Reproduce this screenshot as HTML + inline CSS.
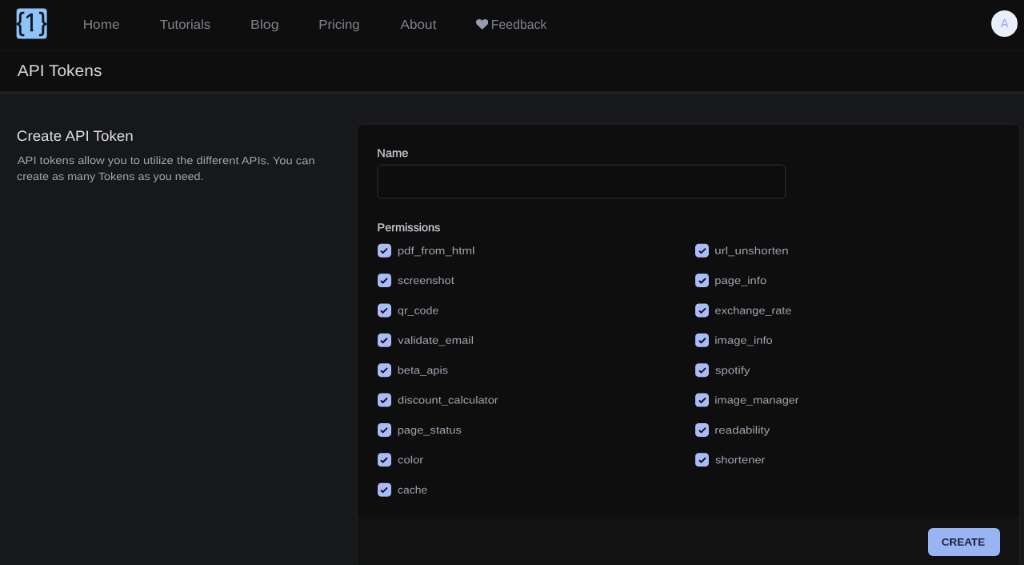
<!DOCTYPE html>
<html lang="en">
<head>
<meta charset="utf-8">
<title>API Tokens</title>
<style>
*{box-sizing:border-box;margin:0;padding:0}
html,body{width:1024px;height:565px;overflow:hidden;background:#17181a}
body{font-family:"Liberation Sans",sans-serif;position:relative;color:#a1a1aa;-webkit-font-smoothing:antialiased}
#root{position:absolute;left:0;top:0;width:1024px;height:565px;overflow:hidden;will-change:transform;zoom:1.25;transform:scale(0.8);transform-origin:0 0}
nav{position:absolute;left:0;top:0;width:1024px;height:51px;background:#0e0e0e;border-bottom:1px solid #1a1a1b}
.logo{position:absolute;left:0;top:0;transform:translate(16.5px,8.3px);width:30.7px;height:30.7px;border-radius:3.2px;background:#90c3f7;color:#0d1520}
.logo span{-webkit-text-stroke:0.25px #0d1520;position:absolute;font-size:24px;line-height:30px;top:0}
.logo .br{font-size:25px;top:-0.8px}
.logo .one{font-size:25px;top:-0.1px;clip-path:polygon(0 0,100% 0,100% 63%,64% 63%,64% 100%,44% 100%,44% 63%,0 63%)}
.nl{position:absolute;top:16.1px;height:16px;line-height:16px;font-size:12.9px;color:#80828c;white-space:nowrap}
.avatar{position:absolute;left:991.2px;top:10.3px;width:26.6px;height:26.8px;border-radius:50%;background:#e9eefb;color:#95a5f1;font-size:11.5px;line-height:26.6px;text-align:center}
header{position:absolute;left:0;top:51px;width:1024px;height:40px;background:#0e0e0e}
.hline{position:absolute;left:0;top:91px;width:1024px;height:3px;background:linear-gradient(#1c1d1f,#222326 50%,#17181a)}
h1{position:absolute;left:17px;top:50px;height:40px;line-height:40px;font-size:16.1px;font-weight:400;color:#d6d6dc;white-space:nowrap}
h2{position:absolute;left:17px;top:126px;line-height:20px;font-size:14.5px;font-weight:400;color:#dcdce2;white-space:nowrap}
.desc span{position:absolute;left:0;white-space:nowrap}
#d1{top:0.6px}#d2{top:16.6px}
.btn span{display:inline-block}
.desc{position:absolute;left:17px;top:152px;width:320px;height:34px;font-size:10.7px;line-height:16px;color:#9ea2ad}
.card{position:absolute;left:357.6px;top:124.8px;width:661.2px;height:440.4px;background:#0e0e0e;border-radius:5px;box-shadow:0 0 0 1.8px #1c1c1e}
.cin{position:absolute;left:0;top:.4px;width:661.2px;height:440px;border-radius:5px;overflow:hidden}
.foot{position:absolute;left:0;top:391.9px;width:662px;height:60px;background:#121212}
.lab{-webkit-text-stroke:0.2px #cdd0d8;position:absolute;font-size:11.2px;line-height:16px;color:#cdd0d8;white-space:nowrap}
.input{position:absolute;left:0;top:0;transform:translate(19.5px,38.9px);width:409px;height:34.8px;border:1px solid #333337;border-radius:5px;background:#0d0d0d}
.cb{position:absolute;height:16px;line-height:16px;font-size:10.4px;color:#9ea2ad;white-space:nowrap}
.cb i{position:absolute;left:-0.4px;top:1.2px;width:13.6px;height:13.6px;border-radius:3.5px;background:#a9bcf6}
.cb i svg{position:absolute;left:0.4px;top:0.4px;width:12.8px;height:12.8px}
.cb b{position:absolute;left:19.3px;top:0.5px;font-weight:400}
.btn{position:absolute;left:570.4px;top:402.7px;width:71.8px;height:27.7px;border-radius:5px;background:#99b4f2;color:#1b2038;font-size:10px;font-weight:700;text-align:center;line-height:29.2px}
/*TUNE*/
.nl:nth-of-type(1){transform-origin:0 50%;transform:translateX(-0.25px) scaleX(1.0672) rotate(0.03deg)}
.nl:nth-of-type(2){transform-origin:0 50%;transform:translateX(-0.20px) scaleX(1.0363) rotate(0.03deg)}
.nl:nth-of-type(3){transform-origin:0 50%;transform:translateX(0.00px) scaleX(1.1063) rotate(0.03deg)}
.nl:nth-of-type(4){transform-origin:0 50%;transform:translateX(0.15px) scaleX(1.0457) rotate(0.03deg)}
.nl:nth-of-type(5){transform-origin:0 50%;transform:translateX(0.45px) scaleX(1.0657) rotate(0.03deg)}
.nl:nth-of-type(6) span{transform-origin:0 50%;transform:translateX(-0.10px) scaleX(0.9837) rotate(0.03deg)}
h1{transform-origin:0 50%;transform:translateX(0.60px) scaleX(1.0422) rotate(0.03deg)}
h2{transform-origin:0 50%;transform:translateX(-0.15px) scaleX(1.0378) rotate(0.03deg)}
#d1{transform-origin:0 50%;transform:translateX(0.60px) scaleX(1.1037) rotate(0.03deg)}
#d2{transform-origin:0 50%;transform:translateX(0.10px) scaleX(1.0741) rotate(0.03deg)}
#lname{transform-origin:0 50%;transform:translateX(-0.55px) scaleX(1.0470) rotate(0.03deg)}
#lperm{transform-origin:0 50%;transform:translateX(-0.35px) scaleX(1.0327) rotate(0.03deg)}
#L0 b{transform-origin:0 50%;transform:translateX(0.55px) scaleX(1.1641) rotate(0.03deg)}
#L1 b{transform-origin:0 50%;transform:translateX(0.80px) scaleX(1.1109) rotate(0.03deg)}
#L2 b{transform-origin:0 50%;transform:translateX(0.80px) scaleX(1.0918) rotate(0.03deg)}
#L3 b{transform-origin:0 50%;transform:translateX(1.05px) scaleX(1.1384) rotate(0.03deg)}
#L4 b{transform-origin:0 50%;transform:translateX(0.55px) scaleX(1.1227) rotate(0.03deg)}
#L5 b{transform-origin:0 50%;transform:translateX(0.80px) scaleX(1.1299) rotate(0.03deg)}
#L6 b{transform-origin:0 50%;transform:translateX(0.55px) scaleX(1.1301) rotate(0.03deg)}
#L7 b{transform-origin:0 50%;transform:translateX(0.80px) scaleX(1.1455) rotate(0.03deg)}
#L8 b{transform-origin:0 50%;transform:translateX(0.80px) scaleX(1.0704) rotate(0.03deg)}
#R0 b{transform-origin:0 50%;transform:translateX(-0.55px) scaleX(1.1615) rotate(0.03deg)}
#R1 b{transform-origin:0 50%;transform:translateX(-0.55px) scaleX(1.1349) rotate(0.03deg)}
#R2 b{transform-origin:0 50%;transform:translateX(-0.30px) scaleX(1.1140) rotate(0.03deg)}
#R3 b{transform-origin:0 50%;transform:translateX(-0.55px) scaleX(1.1405) rotate(0.03deg)}
#R4 b{transform-origin:0 50%;transform:translateX(-0.05px) scaleX(1.1597) rotate(0.03deg)}
#R5 b{transform-origin:0 50%;transform:translateX(-0.55px) scaleX(1.1219) rotate(0.03deg)}
#R6 b{transform-origin:0 50%;transform:translateX(-0.55px) scaleX(1.1658) rotate(0.03deg)}
#R7 b{transform-origin:0 50%;transform:translateX(-0.05px) scaleX(1.1402) rotate(0.03deg)}
.btn span{transform-origin:0 50%;transform:translateX(-2.45px) scaleX(1.0734) rotate(0.03deg)}
/*ENDTUNE*/
</style>
</head>
<body>
<div id="root">
<nav>
  <div class="logo"><span class="br" style="left:-0.3px">{</span><span class="one" style="left:7.7px">1</span><span class="br" style="left:22.35px">}</span></div>
  <a class="nl" style="left:83px">Home</a>
  <a class="nl" style="left:159.6px">Tutorials</a>
  <a class="nl" style="left:250.4px">Blog</a>
  <a class="nl" style="left:318.4px">Pricing</a>
  <a class="nl" style="left:400.2px">About</a>
  <a class="nl" style="left:475.6px"><svg style="position:absolute;left:0;top:3.3px" width="12.4" height="10" viewBox="0 0 512 448" preserveAspectRatio="none"><path fill="#999cb0" d="M462.3 30.6C407.5-16.1 326 -7.7 275.7 44.2L256 64.500l-19.700-20.300C186.1-7.700 104.500-16.100 49.700 30.600c-62.800 53.600-66.100 149.800-9.900 207.900l193.500 199.800c12.500 12.900 32.800 12.900 45.300 0l193.500-199.800c56.300-58.100 53-154.300-9.800-207.900z"/></svg><span style="display:inline-block;margin-left:15.6px">Feedback</span></a>
  <div class="avatar">A</div>
</nav>
<header></header>
<div class="hline"></div>
<h1>API Tokens</h1>
<h2>Create API Token</h2>
<p class="desc"><span id="d1">API tokens allow you to utilize the different APIs. You can</span> <span id="d2">create as many Tokens as you need.</span></p>

<div class="card"><div class="cin">
  <div class="lab" id="lname" style="left:19.8px;top:19.2px">Name</div>
  <div class="input"></div>
  <div class="lab" id="lperm" style="left:19.8px;top:94px">Permissions</div>
  <label class="cb" id="L0" style="left:20.0px;top:0;transform:translateY(117.30px)"><i><svg viewBox="0 0 16 16"><path fill="#10122a" d="M12.207 4.793a1 1 0 010 1.414l-5 5a1 1 0 01-1.414 0l-2-2a1 1 0 011.414-1.414L6.500 9.086l4.293-4.293a1 1 0 011.414 0z"/></svg></i><b>pdf_from_html</b></label>
  <label class="cb" id="L1" style="left:20.0px;top:0;transform:translateY(147.20px)"><i><svg viewBox="0 0 16 16"><path fill="#10122a" d="M12.207 4.793a1 1 0 010 1.414l-5 5a1 1 0 01-1.414 0l-2-2a1 1 0 011.414-1.414L6.500 9.086l4.293-4.293a1 1 0 011.414 0z"/></svg></i><b>screenshot</b></label>
  <label class="cb" id="L2" style="left:20.0px;top:0;transform:translateY(177.10px)"><i><svg viewBox="0 0 16 16"><path fill="#10122a" d="M12.207 4.793a1 1 0 010 1.414l-5 5a1 1 0 01-1.414 0l-2-2a1 1 0 011.414-1.414L6.500 9.086l4.293-4.293a1 1 0 011.414 0z"/></svg></i><b>qr_code</b></label>
  <label class="cb" id="L3" style="left:20.0px;top:0;transform:translateY(207.00px)"><i><svg viewBox="0 0 16 16"><path fill="#10122a" d="M12.207 4.793a1 1 0 010 1.414l-5 5a1 1 0 01-1.414 0l-2-2a1 1 0 011.414-1.414L6.500 9.086l4.293-4.293a1 1 0 011.414 0z"/></svg></i><b>validate_email</b></label>
  <label class="cb" id="L4" style="left:20.0px;top:0;transform:translateY(236.90px)"><i><svg viewBox="0 0 16 16"><path fill="#10122a" d="M12.207 4.793a1 1 0 010 1.414l-5 5a1 1 0 01-1.414 0l-2-2a1 1 0 011.414-1.414L6.500 9.086l4.293-4.293a1 1 0 011.414 0z"/></svg></i><b>beta_apis</b></label>
  <label class="cb" id="L5" style="left:20.0px;top:0;transform:translateY(266.80px)"><i><svg viewBox="0 0 16 16"><path fill="#10122a" d="M12.207 4.793a1 1 0 010 1.414l-5 5a1 1 0 01-1.414 0l-2-2a1 1 0 011.414-1.414L6.500 9.086l4.293-4.293a1 1 0 011.414 0z"/></svg></i><b>discount_calculator</b></label>
  <label class="cb" id="L6" style="left:20.0px;top:0;transform:translateY(296.70px)"><i><svg viewBox="0 0 16 16"><path fill="#10122a" d="M12.207 4.793a1 1 0 010 1.414l-5 5a1 1 0 01-1.414 0l-2-2a1 1 0 011.414-1.414L6.500 9.086l4.293-4.293a1 1 0 011.414 0z"/></svg></i><b>page_status</b></label>
  <label class="cb" id="L7" style="left:20.0px;top:0;transform:translateY(326.60px)"><i><svg viewBox="0 0 16 16"><path fill="#10122a" d="M12.207 4.793a1 1 0 010 1.414l-5 5a1 1 0 01-1.414 0l-2-2a1 1 0 011.414-1.414L6.500 9.086l4.293-4.293a1 1 0 011.414 0z"/></svg></i><b>color</b></label>
  <label class="cb" id="L8" style="left:20.0px;top:0;transform:translateY(356.50px)"><i><svg viewBox="0 0 16 16"><path fill="#10122a" d="M12.207 4.793a1 1 0 010 1.414l-5 5a1 1 0 01-1.414 0l-2-2a1 1 0 011.414-1.414L6.500 9.086l4.293-4.293a1 1 0 011.414 0z"/></svg></i><b>cache</b></label>
  <label class="cb" id="R0" style="left:338.2px;top:0;transform:translateY(117.30px)"><i><svg viewBox="0 0 16 16"><path fill="#10122a" d="M12.207 4.793a1 1 0 010 1.414l-5 5a1 1 0 01-1.414 0l-2-2a1 1 0 011.414-1.414L6.500 9.086l4.293-4.293a1 1 0 011.414 0z"/></svg></i><b>url_unshorten</b></label>
  <label class="cb" id="R1" style="left:338.2px;top:0;transform:translateY(147.20px)"><i><svg viewBox="0 0 16 16"><path fill="#10122a" d="M12.207 4.793a1 1 0 010 1.414l-5 5a1 1 0 01-1.414 0l-2-2a1 1 0 011.414-1.414L6.500 9.086l4.293-4.293a1 1 0 011.414 0z"/></svg></i><b>page_info</b></label>
  <label class="cb" id="R2" style="left:338.2px;top:0;transform:translateY(177.10px)"><i><svg viewBox="0 0 16 16"><path fill="#10122a" d="M12.207 4.793a1 1 0 010 1.414l-5 5a1 1 0 01-1.414 0l-2-2a1 1 0 011.414-1.414L6.500 9.086l4.293-4.293a1 1 0 011.414 0z"/></svg></i><b>exchange_rate</b></label>
  <label class="cb" id="R3" style="left:338.2px;top:0;transform:translateY(207.00px)"><i><svg viewBox="0 0 16 16"><path fill="#10122a" d="M12.207 4.793a1 1 0 010 1.414l-5 5a1 1 0 01-1.414 0l-2-2a1 1 0 011.414-1.414L6.500 9.086l4.293-4.293a1 1 0 011.414 0z"/></svg></i><b>image_info</b></label>
  <label class="cb" id="R4" style="left:338.2px;top:0;transform:translateY(236.90px)"><i><svg viewBox="0 0 16 16"><path fill="#10122a" d="M12.207 4.793a1 1 0 010 1.414l-5 5a1 1 0 01-1.414 0l-2-2a1 1 0 011.414-1.414L6.500 9.086l4.293-4.293a1 1 0 011.414 0z"/></svg></i><b>spotify</b></label>
  <label class="cb" id="R5" style="left:338.2px;top:0;transform:translateY(266.80px)"><i><svg viewBox="0 0 16 16"><path fill="#10122a" d="M12.207 4.793a1 1 0 010 1.414l-5 5a1 1 0 01-1.414 0l-2-2a1 1 0 011.414-1.414L6.500 9.086l4.293-4.293a1 1 0 011.414 0z"/></svg></i><b>image_manager</b></label>
  <label class="cb" id="R6" style="left:338.2px;top:0;transform:translateY(296.70px)"><i><svg viewBox="0 0 16 16"><path fill="#10122a" d="M12.207 4.793a1 1 0 010 1.414l-5 5a1 1 0 01-1.414 0l-2-2a1 1 0 011.414-1.414L6.500 9.086l4.293-4.293a1 1 0 011.414 0z"/></svg></i><b>readability</b></label>
  <label class="cb" id="R7" style="left:338.2px;top:0;transform:translateY(326.60px)"><i><svg viewBox="0 0 16 16"><path fill="#10122a" d="M12.207 4.793a1 1 0 010 1.414l-5 5a1 1 0 01-1.414 0l-2-2a1 1 0 011.414-1.414L6.500 9.086l4.293-4.293a1 1 0 011.414 0z"/></svg></i><b>shortener</b></label>
  <div class="foot"></div>
  <div class="btn"><span>CREATE</span></div>
</div></div>
</div>
</body>
</html>
